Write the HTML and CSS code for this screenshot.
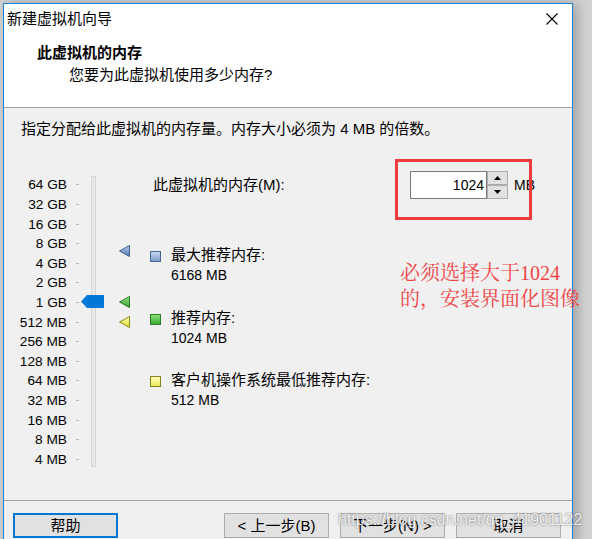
FILE: index.html
```html
<!DOCTYPE html>
<html lang="zh-CN">
<head>
    <meta charset="UTF-8">
    <title>新建虚拟机向导</title>
    <link rel="stylesheet" href="styles.css">
</head>
<body>
<div class="window">
    <div class="header">
        <div class="titlebar">
            <span>新建虚拟机向导</span>
            <svg class="close" width="12" height="12" viewBox="0 0 12 12">
                <path d="M0.5 0.5L11.5 11.5M11.5 0.5L0.5 11.5" stroke="#000" stroke-width="1.1" fill="none"/>
            </svg>
        </div>
        <div class="head-title">此虚拟机的内存</div>
        <div class="head-sub">您要为此虚拟机使用多少内存?</div>
    </div>

    <div class="main">
        <p class="intro">指定分配给此虚拟机的内存量。内存大小必须为 4 MB 的倍数。</p>
        <div class="memory">
            <!-- 刻度 -->
            <ul class="scale">
                <li><span>64 GB</span><i class="tick"></i></li>
                <li><span>32 GB</span><i class="tick"></i></li>
                <li><span>16 GB</span><i class="tick"></i></li>
                <li><span>8 GB</span><i class="tick"></i></li>
                <li><span>4 GB</span><i class="tick"></i></li>
                <li><span>2 GB</span><i class="tick"></i></li>
                <li><span>1 GB</span><i class="tick"></i></li>
                <li><span>512 MB</span><i class="tick"></i></li>
                <li><span>256 MB</span><i class="tick"></i></li>
                <li><span>128 MB</span><i class="tick"></i></li>
                <li><span>64 MB</span><i class="tick"></i></li>
                <li><span>32 MB</span><i class="tick"></i></li>
                <li><span>16 MB</span><i class="tick"></i></li>
                <li><span>8 MB</span><i class="tick"></i></li>
                <li><span>4 MB</span><i class="tick"></i></li>
            </ul>
            <div class="track">
                <svg class="thumb" width="23" height="13" viewBox="0 0 23 13">
                    <polygon points="0,6.5 6,0 23,0 23,13 6,13" fill="#0078d7"/>
                </svg>
            </div>
            <!-- 推荐值标记 -->
            <div class="marks">
                <svg class="mark" style="top:74px" width="11" height="12" viewBox="0 0 11 12">
                    <defs><linearGradient id="gb" x1="0" y1="0" x2="0" y2="1"><stop offset="0" stop-color="#b9cde8"/><stop offset="1" stop-color="#4f7bb5"/></linearGradient></defs>
                    <polygon points="0.5,6 10.5,0.5 10.5,11.5" fill="url(#gb)" stroke="#3d5f8c"/>
                </svg>
                <svg class="mark" style="top:125px" width="11" height="12" viewBox="0 0 11 12">
                    <defs><linearGradient id="gg" x1="0" y1="0" x2="0" y2="1"><stop offset="0" stop-color="#9be58a"/><stop offset="1" stop-color="#2f9e2a"/></linearGradient></defs>
                    <polygon points="0.5,6 10.5,0.5 10.5,11.5" fill="url(#gg)" stroke="#237a20"/>
                </svg>
                <svg class="mark" style="top:145px" width="11" height="12" viewBox="0 0 11 12">
                    <defs><linearGradient id="gy" x1="0" y1="0" x2="0" y2="1"><stop offset="0" stop-color="#ffffb0"/><stop offset="1" stop-color="#e0e030"/></linearGradient></defs>
                    <polygon points="0.5,6 10.5,0.5 10.5,11.5" fill="url(#gy)" stroke="#8a8a20"/>
                </svg>
            </div>
            <div class="info">
                <div class="mem-row">
                    <span class="mem-label">此虚拟机的内存(M):</span>
                    <div class="spin">
                        <div class="spin-input">1024</div>
                        <div class="spin-btns">
                            <div class="spin-btn">
                                <svg width="7" height="4" viewBox="0 0 7 4"><polygon points="3.5,0 7,4 0,4" fill="#000"/></svg>
                            </div>
                            <div class="spin-btn">
                                <svg width="7" height="4" viewBox="0 0 7 4"><polygon points="0,0 7,0 3.5,4" fill="#000"/></svg>
                            </div>
                        </div>
                    </div>
                    <span class="unit">MB</span>
                </div>
                <div class="item">
                    <span class="sq blue"></span>
                    <div>
                        <div>最大推荐内存:</div>
                        <div class="num">6168 MB</div>
                    </div>
                </div>
                <div class="item">
                    <span class="sq green"></span>
                    <div>
                        <div>推荐内存:</div>
                        <div class="num">1024 MB</div>
                    </div>
                </div>
                <div class="item">
                    <span class="sq yellow"></span>
                    <div>
                        <div>客户机操作系统最低推荐内存:</div>
                        <div class="num">512 MB</div>
                    </div>
                </div>
                <div class="redbox"></div>
                <div class="note">必须选择大于1024<br>的，安装界面化图像</div>
            </div>
        </div>
    </div>

    <div class="footer">
        <div class="btn help">帮助</div>
        <div class="btn">&lt; 上一步(B)</div>
        <div class="btn">下一步(N) &gt;</div>
        <div class="btn">取消</div>
    </div>
    <div class="watermark">https://blog.csdn.net/qq_41901122</div>
</div>
</body>
</html>
```

FILE: styles.css
```css
*{
    margin: 0;
    padding: 0;
}
body{
    background: #d2d2d2;
    height: 539px;
    overflow: hidden;
    font-family: "Liberation Sans", "Noto Sans CJK SC", sans-serif;
    font-size: 15px;
    color: #000;
}
.window{
    position: relative;
    margin: 3px 0 0 3px;
    width: 570px;
    height: 545px;
    box-sizing: border-box;
    border: 1px solid #1883d7;
    background: #f0f0f0;
    box-shadow: 4px 0 12px rgba(0,0,0,.25);
}
.header{
    height: 104px;
    box-sizing: border-box;
    background: #fff;
    border-bottom: 1px solid #a0a0a0;
}
.titlebar{
    display: flex;
    justify-content: space-between;
    padding: 5px 14px 0 3px;
    line-height: 20px;
}
.close{
    margin-top: 4px;
}
.head-title{
    margin-top: 14px;
    padding-left: 33px;
    line-height: 20px;
    font-weight: bold;
}
.head-sub{
    margin-top: 2px;
    padding-left: 65px;
    line-height: 20px;
}
.main{
    height: 393px;
    box-sizing: border-box;
    border-bottom: 1px solid #a0a0a0;
    padding-top: 11px;
}
.intro{
    margin-left: 17px;
    line-height: 20px;
}
.memory{
    display: flex;
    margin-top: 32px;
}
.scale{
    list-style: none;
    width: 75px;
    margin-top: 4.2px;
}
.scale li{
    display: flex;
    justify-content: flex-end;
    align-items: center;
    height: 19.6px;
    font-size: 13.7px;
}
.tick{
    width: 3px;
    height: 1px;
    background: #b8b8b8;
    margin-left: 9px;
}
.track{
    position: relative;
    margin: 5px 0 0 12px;
    width: 5px;
    height: 291px;
    box-sizing: border-box;
    background: #e7e7e7;
    border: 1px solid #d6d6d6;
}
.thumb{
    position: absolute;
    left: -11px;
    top: 118px;
}
.marks{
    position: relative;
    width: 11px;
    margin-left: 23px;
}
.mark{
    position: absolute;
    left: 0;
}
.info{
    position: relative;
    flex: 1;
    margin-left: 20px;
    line-height: 20px;
}
.mem-row{
    display: flex;
    align-items: center;
    height: 28px;
}
.mem-label{
    width: 260px;
    box-sizing: border-box;
    padding-left: 3px;
}
.spin{
    display: flex;
}
.spin-input{
    width: 77px;
    height: 28px;
    box-sizing: border-box;
    border: 1px solid #7a7a7a;
    background: #fff;
    text-align: right;
    padding-right: 2px;
    line-height: 26px;
    font-size: 14px;
}
.spin-btns{
    display: flex;
    flex-direction: column;
    width: 21px;
}
.spin-btn{
    height: 14px;
    box-sizing: border-box;
    border: 1px solid #adadad;
    background: #e1e1e1;
    display: flex;
    align-items: center;
    justify-content: center;
}
.unit{
    margin-left: 6px;
    font-size: 14px;
}
.item{
    display: flex;
    margin-top: 22.5px;
}
.mem-row + .item{
    margin-top: 46px;
}
.num{
    font-size: 14px;
}
.sq{
    width: 11px;
    height: 11px;
    box-sizing: border-box;
    margin: 6px 10px 0 0;
    border: 1px solid;
}
.sq.blue{
    border-color: #44679a;
    background: linear-gradient(#c9d8ee, #7e9ecb);
}
.sq.green{
    border-color: #2a7d24;
    background: linear-gradient(#8fe07c, #3aaa33);
}
.sq.yellow{
    border-color: #85851e;
    background: linear-gradient(#ffffc0, #eaea55);
}
.redbox{
    position: absolute;
    left: 245px;
    top: -12px;
    width: 137px;
    height: 61px;
    box-sizing: border-box;
    border: 3px solid #ee3b3b;
}
.note{
    position: absolute;
    left: 250px;
    top: 89px;
    font-family: "Liberation Serif", "Noto Serif CJK SC", "Noto Sans CJK SC", serif;
    font-size: 20px;
    line-height: 26px;
    color: #ee4646;
    white-space: nowrap;
}
.footer{
    display: flex;
    gap: 11px;
    padding: 12px 11px 0 9px;
}
.btn{
    width: 105px;
    height: 25px;
    box-sizing: border-box;
    background: #e1e1e1;
    border: 1px solid #adadad;
    text-align: center;
    line-height: 23px;
}
.btn.help{
    border: 2px solid #0078d7;
    line-height: 21px;
    margin-right: auto;
}
.watermark{
    position: absolute;
    left: 334px;
    top: 506px;
    font-size: 16px;
    line-height: 20px;
    color: rgba(255,255,255,.85);
    text-shadow: 0 0 2px rgba(0,0,0,.55);
    white-space: nowrap;
}
```
